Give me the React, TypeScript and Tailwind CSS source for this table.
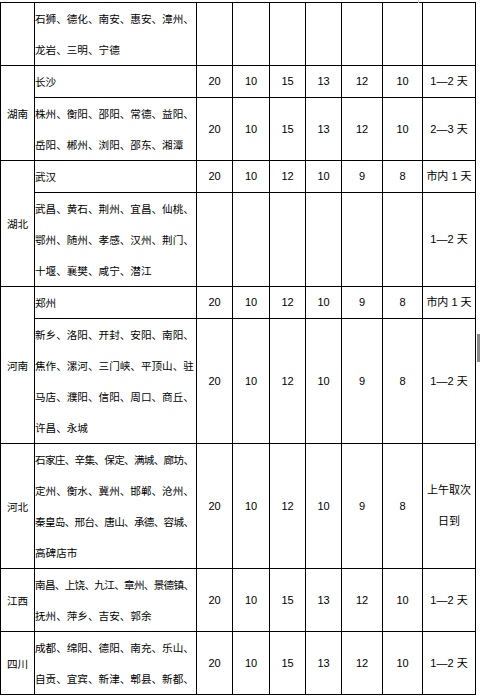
import React from "react";

type Row = {
  prov?: string;
  provSpan?: number;
  cities: string[];
  nums: (string | number)[];
  days: string[];
};

const rows: Row[] = [
  { prov: "", provSpan: 1, cities: ["石狮、德化、南安、惠安、漳州、", "龙岩、三明、宁德"], nums: ["", "", "", "", "", ""], days: [""] },
  { prov: "湖南", provSpan: 2, cities: ["长沙"], nums: [20, 10, 15, 13, 12, 10], days: ["1—2 天"] },
  { cities: ["株州、衡阳、邵阳、常德、益阳、", "岳阳、郴州、浏阳、邵东、湘潭"], nums: [20, 10, 15, 13, 12, 10], days: ["2—3 天"] },
  { prov: "湖北", provSpan: 2, cities: ["武汉"], nums: [20, 10, 12, 10, 9, 8], days: ["市内 1 天"] },
  { cities: ["武昌、黄石、荆州、宜昌、仙桃、", "鄂州、随州、孝感、汉州、荆门、", "十堰、襄樊、咸宁、潜江"], nums: ["", "", "", "", "", ""], days: ["1—2 天"] },
  { prov: "河南", provSpan: 2, cities: ["郑州"], nums: [20, 10, 12, 10, 9, 8], days: ["市内 1 天"] },
  { cities: ["新乡、洛阳、开封、安阳、南阳、", "焦作、漯河、三门峡、平顶山、驻", "马店、濮阳、信阳、周口、商丘、", "许昌、永城"], nums: [20, 10, 12, 10, 9, 8], days: ["1—2 天"] },
  { prov: "河北", provSpan: 1, cities: ["石家庄、辛集、保定、满城、廊坊、", "定州、衡水、冀州、邯郸、沧州、", "秦皇岛、邢台、唐山、承德、容城、", "高碑店市"], nums: [20, 10, 12, 10, 9, 8], days: ["上午取次", "日到"] },
  { prov: "江西", provSpan: 1, cities: ["南昌、上饶、九江、章州、景德镇、", "抚州、萍乡、吉安、郭余"], nums: [20, 10, 15, 13, 12, 10], days: ["1—2 天"] },
  { prov: "四川", provSpan: 1, cities: ["成都、绵阳、德阳、南充、乐山、", "自贡、宜宾、新津、郫县、新都、"], nums: [20, 10, 15, 13, 12, 10], days: ["1—2 天"] },
];

const cell = "border border-black p-0 align-middle leading-[31px]";

export default function App() {
  return (
    <div className="relative h-[699px] w-[480px] overflow-hidden bg-white pt-[2px] text-black font-['Liberation_Sans','Noto_Sans_CJK_SC',sans-serif]">
      <table className="w-[475px] table-fixed border-collapse">
        <colgroup>
          <col className="w-[34px]" />
          <col className="w-[162px]" />
          <col className="w-[36px]" />
          <col className="w-[37px]" />
          <col className="w-[36px]" />
          <col className="w-[36px]" />
          <col className="w-[41px]" />
          <col className="w-[40px]" />
          <col className="w-[53px]" />
        </colgroup>
        <tbody>
          {rows.map((r, i) => (
            <tr key={i}>
              {r.provSpan !== undefined && (
                <td rowSpan={r.provSpan} className={`${cell} text-center text-[10.6px] font-['Noto_Sans_CJK_SC',sans-serif]`}>
                  {r.prov}
                </td>
              )}
              <td className={`${cell} text-left text-[10.6px] font-['Noto_Sans_CJK_SC',sans-serif]`}>
                {r.cities.map((c) => (
                  // long lines get squeezed a bit so they stay in the cell
                  <div key={c} className={c.length > 15 ? "whitespace-nowrap tracking-[-0.7px]" : "whitespace-nowrap"}>
                    {c}
                  </div>
                ))}
              </td>
              {r.nums.map((n, j) => (
                <td key={j} className={`${cell} text-center text-[11px]`}>
                  {n}
                </td>
              ))}
              <td className={`${cell} text-center text-[11px]`}>
                {r.days.map((d) => (
                  <div key={d} className="whitespace-nowrap">{d}</div>
                ))}
              </td>
            </tr>
          ))}
        </tbody>
      </table>
      {/* scroll handle at the right edge */}
      <div className="absolute left-[477px] top-[334px] h-[28px] w-[3px] bg-[#8a8a8a]" />
      <div className="absolute left-[418px] top-0 h-[3px] w-px bg-[#cfcfcf]" />
    </div>
  );
}
